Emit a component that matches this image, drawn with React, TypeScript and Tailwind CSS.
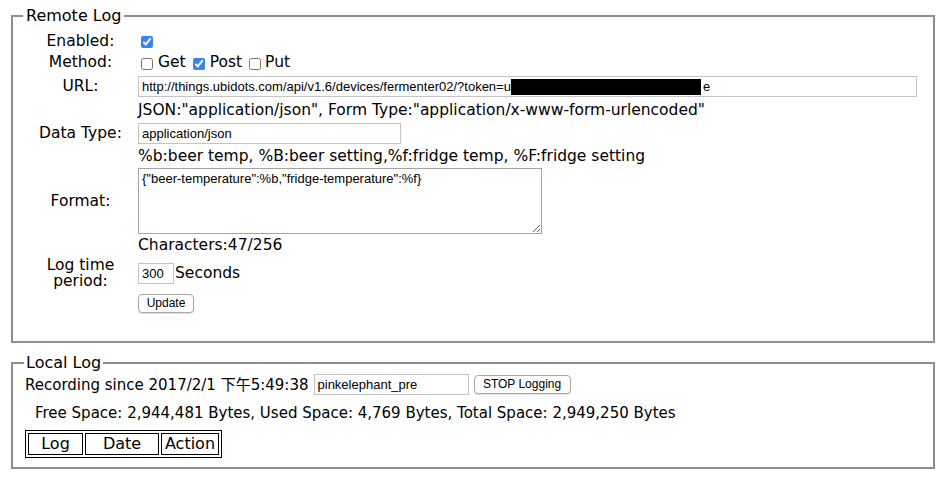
import React from 'react'

function Row({ label, className, children }: { label?: React.ReactNode; className: string; children?: React.ReactNode }) {
  return (
    <div className={"flex " + className}>
      <div className="w-[115px] shrink-0 flex items-center justify-center text-center">{label}</div>
      <div className="flex-1 flex items-center whitespace-nowrap">{children}</div>
    </div>
  )
}

const inputCls = "h-[21px] border border-[#c4c4c4] bg-white px-[3px] text-[13px] font-['Liberation_Sans',Arial,sans-serif] text-black outline-none"
const btnCls = "bg-white border border-[#a8a8a8] rounded-[4px] text-[12px] font-['Liberation_Sans',Arial,sans-serif] text-black shadow-[0_1px_1px_rgba(0,0,0,0.12)] flex items-center justify-center"

export default function App() {
  return (
    <div className="h-[490px] bg-white text-black pt-[6px] pl-[11px] pr-[9px] font-['DejaVu_Sans',sans-serif] text-[15.5px] leading-[19px]">
      <fieldset className="border-2 border-[#8e8e8e] pl-[10px] pr-[14px] pt-[6px] pb-[26px]">
        <legend className="px-[3px] text-[16px] leading-[19px]">Remote Log</legend>

        <Row label="Enabled:" className="h-[21px]">
          <input type="checkbox" defaultChecked className="ml-[3px] w-[12px] h-[12px] accent-[#3b82f6]" />
        </Row>

        <Row label="Method:" className="h-[21px]">
          <input type="checkbox" className="ml-[3px] mt-[3px] w-[12px] h-[12px]" />
          <span className="ml-[5px]">Get</span>
          <input type="checkbox" defaultChecked className="ml-[7px] mt-[3px] w-[12px] h-[12px] accent-[#3b82f6]" />
          <span className="ml-[5px]">Post</span>
          <input type="checkbox" className="ml-[7px] mt-[3px] w-[12px] h-[12px]" />
          <span className="ml-[4px]">Put</span>
        </Row>

        <Row label="URL:" className="h-[27px]">
          <div className={inputCls + " w-[779px] flex items-center whitespace-nowrap overflow-hidden"}>
            <span>http://things.ubidots.com/api/v1.6/devices/fermenter02/?token=u</span>
            <span className="inline-block w-[190px] h-[16px] bg-black"></span>
            <span className="ml-[2px]">e</span>
          </div>
        </Row>

        <Row className="h-[21px]">
          <span>JSON:"application/json", Form Type:"application/x-www-form-urlencoded"</span>
        </Row>

        <Row label="Data Type:" className="h-[25px]">
          <input className={inputCls + " w-[263px]"} defaultValue="application/json" />
        </Row>

        <Row className="h-[20px]">
          <span>%b:beer temp, %B:beer setting,%f:fridge temp, %F:fridge setting</span>
        </Row>

        <Row label="Format:" className="h-[70px]">
          <textarea
            className="w-[404px] h-[66px] border border-[#a4a4a4] bg-white px-[3px] py-[2px] text-[13px] leading-[16px] font-['Liberation_Sans',Arial,sans-serif] text-black outline-none"
            defaultValue={'{"beer-temperature":%b,"fridge-temperature":%f}'}
          />
        </Row>

        <Row className="h-[18px]">
          <span>Characters:47/256</span>
        </Row>

        <Row label={<span className="leading-[16.5px]">Log time<br />period:</span>} className="h-[38px]">
          <input className={inputCls + " w-[36px]"} defaultValue="300" />
          <span className="ml-[1px]">Seconds</span>
        </Row>

        <Row className="h-[23px]">
          <button className={btnCls + " w-[56px] h-[19px]"}>Update</button>
        </Row>
      </fieldset>

      <fieldset className="mt-[10px] border-2 border-[#8e8e8e] pl-[12px] pr-[14px] pt-[1px] pb-[9px] text-[15px]">
        <legend className="-ml-[1px] px-[2px] text-[16px] leading-[19px]">Local Log</legend>

        <div className="h-[23px] flex items-center whitespace-nowrap">
          <span>Recording since 2017/2/1 <span className="font-['Noto_Sans_CJK_TC',sans-serif]">下午</span>5:49:38</span>
          <input className={inputCls + " ml-[5px] w-[155px] h-[20px] text-[12px]"} defaultValue="pinkelephant_pre" />
          <button className={btnCls + " ml-[5px] w-[97px] h-[19px]"}>STOP Logging</button>
        </div>

        <div className="mt-[4px] h-[26px] flex items-center pl-[10px] whitespace-nowrap">
          Free Space: 2,944,481 Bytes, Used Space: 4,769 Bytes, Total Space: 2,949,250 Bytes
        </div>

        <table className="mt-[4px] border border-black border-separate border-spacing-[2px] text-[16px]">
          <thead>
            <tr>
              <th className="w-[55px] border border-black font-normal leading-[20px] text-center">Log</th>
              <th className="w-[74px] border border-black font-normal leading-[20px] text-center">Date</th>
              <th className="w-[58px] border border-black font-normal leading-[20px] text-center">Action</th>
            </tr>
          </thead>
        </table>
      </fieldset>
    </div>
  )
}
